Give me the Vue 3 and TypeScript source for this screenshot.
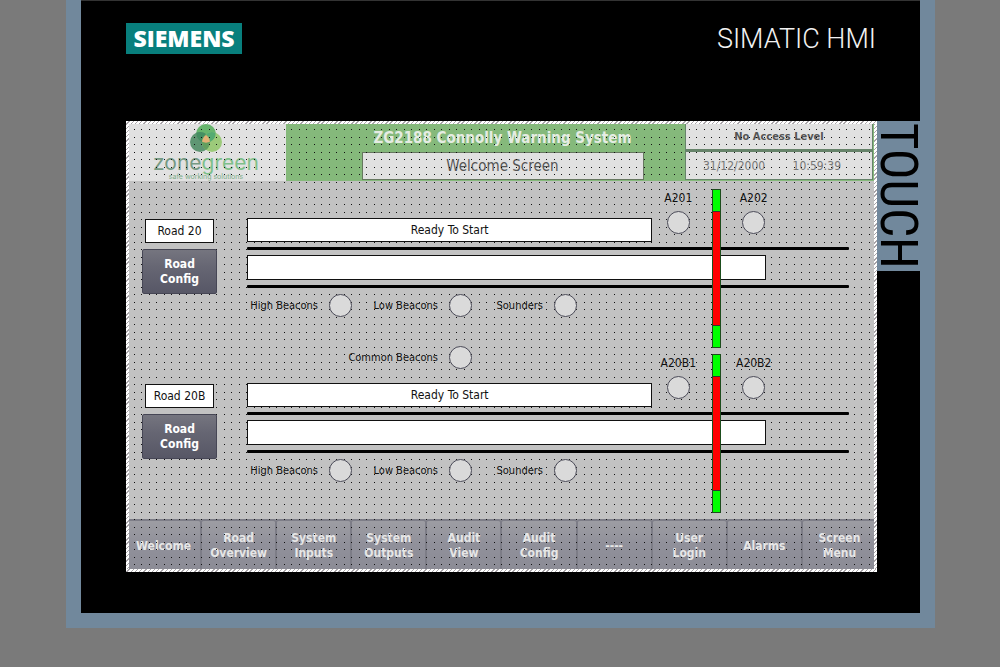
<script setup lang="ts">
interface Lane {
  name: string
  sensors: [string, string]
  status: string
  common: boolean
}

const lanes: Lane[] = [
  { name: 'Road 20', sensors: ['A201', 'A202'], status: 'Ready To Start', common: false },
  { name: 'Road 20B', sensors: ['A20B1', 'A20B2'], status: 'Ready To Start', common: true },
]

const beacons: string[] = ['High Beacons', 'Low Beacons', 'Sounders']

const menu: string[][] = [
  ['Welcome'],
  ['Road', 'Overview'],
  ['System', 'Inputs'],
  ['System', 'Outputs'],
  ['Audit', 'View'],
  ['Audit', 'Config'],
  ['----'],
  ['User', 'Login'],
  ['Alarms'],
  ['Screen', 'Menu'],
]
</script>

<template>
  <div class="device">
    <header class="bezel-top">
      <span class="brand">SIEMENS</span>
      <span class="model">SIMATIC HMI</span>
    </header>

    <div class="bezel-middle">
      <main class="screen">
        <div class="banner">
          <div class="logo">
            <svg class="logo-mark" viewBox="0 0 34 30" width="34" height="30" aria-hidden="true">
              <circle cx="17" cy="10" r="10" fill="#67b56d" />
              <circle cx="11" cy="18" r="10" fill="#5f9673" />
              <circle cx="23" cy="18" r="10" fill="#9cca7a" />
              <path d="M17 10a10 10 0 0 1 0 16a10 10 0 0 1 0-16z" fill="#639f5f" />
              <path d="M7.400 8.700a10 10 0 0 1 9.600 1.300a10 10 0 0 0-4 8a10 10 0 0 1-5.600-9.300z" fill="#458f62" />
              <path d="M26.600 8.700a10 10 0 0 0-9.600 1.300a10 10 0 0 1 4 8a10 10 0 0 0 5.600-9.300z" fill="#55ab72" />
              <path d="M17 11c2 1.500 3.500 3.500 4 6.500c-2 1.500-6 1.500-8 0c.5-3 2-5 4-6.500z" fill="#e3b176" />
            </svg>
            <span class="logo-name">zone<b>green</b></span>
            <span class="logo-tag">safe working solutions</span>
          </div>
          <div class="heading">
            <h1>ZG2188 Connolly Warning System</h1>
            <h2>Welcome Screen</h2>
          </div>
          <div class="session">
            <div class="access">No Access Level</div>
            <div class="clock">
              <span>31/12/2000</span>
              <span>10:59:39</span>
            </div>
          </div>
        </div>

        <div class="lanes">
          <section v-for="lane in lanes" :key="lane.name" class="lane">
            <div class="lane-side">
              <div class="field lane-name">{{ lane.name }}</div>
              <button type="button" class="config">Road<br />Config</button>
            </div>
            <div class="track">
              <div v-if="lane.common" class="beacon common">
                Common Beacons<i class="lamp"></i>
              </div>
              <div class="field status">{{ lane.status }}</div>
              <div class="sensor sensor-left">{{ lane.sensors[0] }}<i class="lamp"></i></div>
              <div class="sensor sensor-right">{{ lane.sensors[1] }}<i class="lamp"></i></div>
              <div class="rail rail-upper"></div>
              <div class="field road"></div>
              <div class="rail rail-lower"></div>
              <div class="beacons">
                <div v-for="name in beacons" :key="name" class="beacon">
                  {{ name }}<i class="lamp"></i>
                </div>
              </div>
              <div class="barrier"><i></i></div>
            </div>
          </section>
        </div>

        <nav class="menu">
          <button v-for="(lines, index) in menu" :key="index" type="button">
            <span v-for="line in lines" :key="line">{{ line }}</span>
          </button>
        </nav>
      </main>
      <aside class="touch"><span>TOUCH</span></aside>
    </div>
  </div>
</template>

<style>
body {
  background: #7a7a7a;
}
</style>

<style scoped>
* {
  box-sizing: border-box;
}

.device {
  --dots: url("data:image/svg+xml,%3Csvg xmlns='http://www.w3.org/2000/svg' width='15' height='15'%3E%3Cpath d='M0 1h1v1H0zM8 1h1v1H8zM0 8h1v1H0zM8 8h1v1H8z' fill='%23101010'/%3E%3C/svg%3E");
  margin: 0 65px 39px 66px;
  padding-bottom: 41px;
  background: #000;
  border: solid #71889c;
  border-width: 0 15px 15px;
  box-shadow: inset 0 1px #333;
  font: 12px/15px "DejaVu Sans Condensed", "DejaVu Sans", sans-serif;
  color: #111;
}

.bezel-top {
  display: flex;
  justify-content: space-between;
  align-items: flex-start;
  height: 121px;
  padding: 23px 44px 0 45px;
}

.brand {
  width: 116px;
  height: 31px;
  background: #087f7d;
  color: #fff;
  font: 800 23px/31px "Open Sans", "Noto Sans", sans-serif;
  text-align: center;
}

.model {
  color: #f2f2f2;
  font: 300 27px/32px "Roboto", sans-serif;
}

.bezel-middle {
  display: flex;
  align-items: flex-start;
  padding-left: 45px;
}

.screen {
  position: relative;
  flex: 1;
  min-width: 0;
  background: #c2c2c2;
}

.screen::after {
  content: "";
  position: absolute;
  inset: 0;
  pointer-events: none;
  --hatch: repeating-linear-gradient(135deg, #fff 0 2px, #a9a5a9 2px 3px);
  background:
    var(--hatch) top / 100% 3px no-repeat,
    var(--hatch) bottom / 100% 3px no-repeat,
    var(--hatch) left / 3px 100% no-repeat,
    var(--hatch) right / 3px 100% no-repeat;
}

.banner {
  position: relative;
  display: grid;
  grid-template-columns: 160px 1fr 192px;
  height: 60px;
  padding-top: 3px;
  background: #85b97b;
}

.banner::after,
.menu::after {
  content: "";
  position: absolute;
  inset: 0;
  pointer-events: none;
  background: var(--dots);
}

.menu::after {
  background-position: 0 7px;
}

.logo {
  display: flex;
  flex-direction: column;
  align-items: center;
  background: #e1e1e1;
}

.logo-mark {
  flex: none;
}

.logo-name {
  margin-top: -2px;
  color: #759a83;
  font: 21px/21px "Inter", sans-serif;
}

.logo-name b {
  color: #7fc08a;
  font-weight: 400;
}

.logo-tag {
  color: #7fae8a;
  font: 7px/8px "Inter", sans-serif;
}

.heading {
  display: flex;
  flex-direction: column;
  align-items: center;
  padding-left: 34px;
}

h1 {
  margin: 0;
  color: #e5ece3;
  font-size: 15px;
  line-height: 28px;
  white-space: nowrap;
}

h2 {
  width: 282px;
  height: 28px;
  margin: 0;
  background: #e1e1e1;
  border: 1px solid #66775f;
  color: #555;
  font-size: 15px;
  font-weight: 400;
  line-height: 27px;
  text-align: center;
}

.session {
  padding-right: 4px;
}

.access,
.clock {
  background: #e1e1e1;
  border: 1px solid #66836a;
  color: #555;
}

.access {
  height: 27px;
  border-width: 0 1px 2px;
  font-size: 11px;
  font-weight: 700;
  line-height: 26px;
  text-align: center;
}

.clock {
  display: flex;
  justify-content: space-between;
  height: 29px;
  padding: 0 31px 0 17px;
  color: #777;
  line-height: 28px;
}

.lanes {
  display: grid;
  gap: 6px;
  padding: 8px 28px 6px 16px;
  background: var(--dots);
}

.lane {
  display: grid;
  grid-template-columns: 75px 1fr;
  column-gap: 30px;
}

.lane-side {
  display: flex;
  flex-direction: column;
  align-items: center;
  gap: 6px;
  padding-top: 30px;
}

.field {
  background: #fff;
  border: 1px solid #111;
  line-height: 23px;
  text-align: center;
}

.lane-name {
  width: 69px;
  height: 24px;
}

.config {
  width: 75px;
  height: 45px;
  padding: 0;
  background: linear-gradient(#75757f, #666673 40%, #575766);
  border: 1px solid #464655;
  border-radius: 2px;
  color: #fff;
  font: inherit;
  font-weight: 700;
}

.track {
  display: grid;
  grid-template-columns: 406fr 60fr 9px 45fr 83fr;
  grid-template-rows: 53px 3px 25px 3px 24px 26px;
  row-gap: 5px;
}

.status {
  grid-area: 1 / 1;
  align-self: end;
  height: 24px;
}

.sensor {
  display: flex;
  flex-direction: column;
  align-items: center;
  gap: 5px;
  width: 52px;
  padding-top: 2px;
}

.sensor-left {
  grid-area: 1 / 2;
}

.sensor-right {
  grid-area: 1 / 4 / auto / 6;
  width: 65px;
}

.rail {
  height: 3px;
  background: #000;
  border-radius: 1px;
}

.rail-upper {
  grid-area: 2 / 1 / auto / 6;
}

.road {
  grid-area: 3 / 1 / auto / 5;
}

.rail-lower {
  grid-area: 4 / 1 / auto / 6;
}

.beacons {
  grid-area: 5 / 1;
  display: grid;
  grid-template-columns: 105px 120px 105px;
}

.beacon {
  display: flex;
  align-items: center;
  justify-content: flex-end;
  gap: 11px;
  font-size: 11px;
  white-space: nowrap;
}

.common {
  grid-area: 1 / 1;
  align-self: start;
  width: 225px;
  margin-top: -8px;
}

.lamp {
  flex: none;
  width: 23px;
  height: 23px;
  background: #dadada;
  border: 1px solid #4b4b58;
  border-radius: 50%;
}

.barrier {
  grid-area: 1 / 3 / 7 / 4;
  z-index: 1;
  padding: 22px 0;
  background: #0f0;
  border: 1px solid #1d4d1d;
}

.barrier i {
  display: block;
  height: 100%;
  background: #f00;
  box-shadow: 0 -1px #333, 0 1px #333;
}

.menu {
  position: relative;
  display: grid;
  grid-template-columns: repeat(10, 1fr);
  height: 53px;
  padding-bottom: 3px;
  background: #92929b;
}

.menu button {
  display: flex;
  flex-direction: column;
  justify-content: center;
  align-items: center;
  min-width: 0;
  padding: 2px 0 0;
  background: linear-gradient(#9d9da3, #90909a 50%, #8c8c96);
  border: solid #7d7d87;
  border-width: 2px 1px 0;
  border-radius: 3px 3px 0 0;
  color: #e6e6e6;
  font: inherit;
  font-weight: 700;
}

.touch {
  width: 43px;
  height: 150px;
  display: flex;
  align-items: center;
  justify-content: center;
  background: #71889c;
  color: #000;
}

.touch span {
  writing-mode: vertical-rl;
  font: 51px/43px "Liberation Sans Narrow", "Roboto Condensed", "Liberation Sans", sans-serif;
}
</style>
